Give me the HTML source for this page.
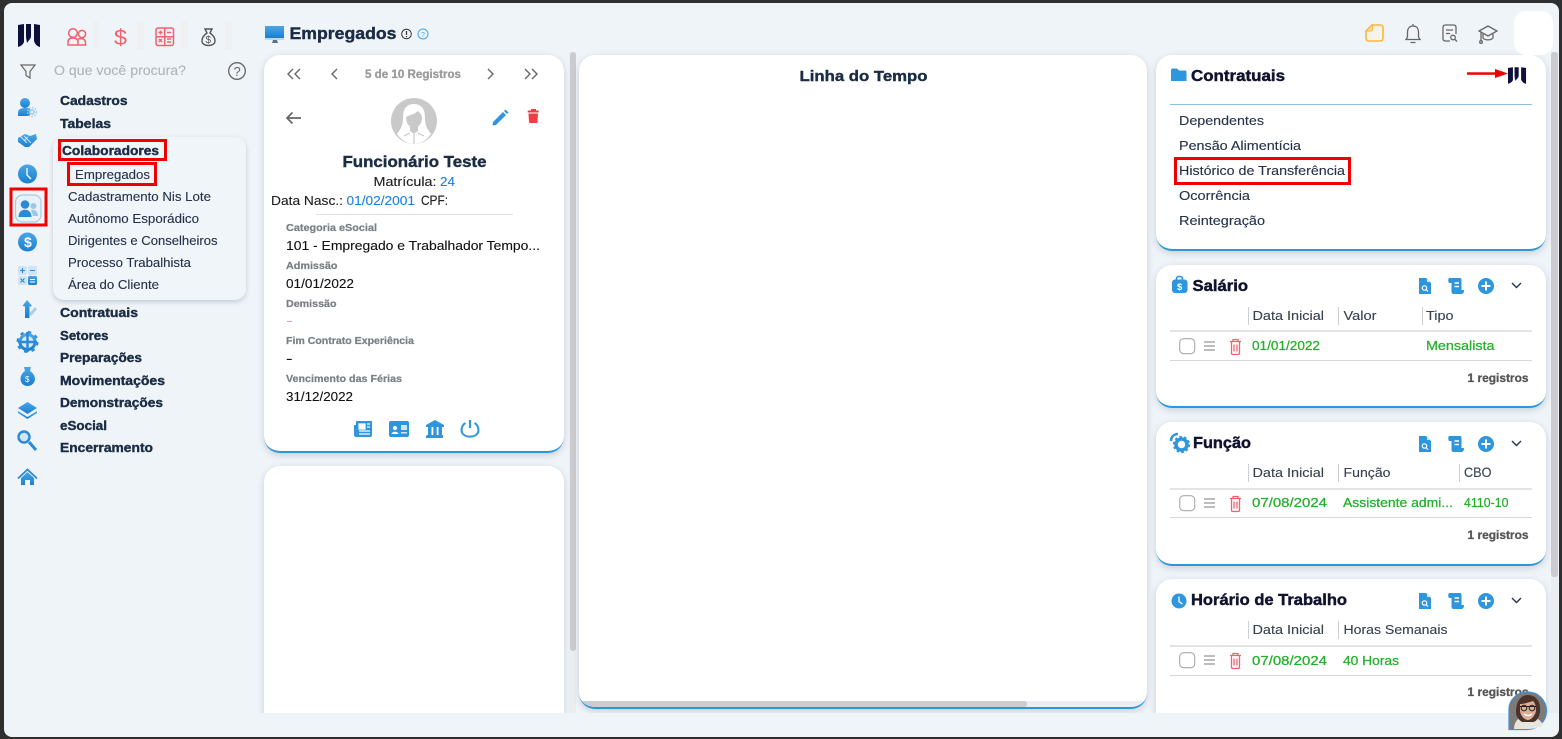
<!DOCTYPE html>
<html lang="pt-BR"><head><meta charset="utf-8"><title>Empregados</title>
<style>
html,body{margin:0;padding:0;width:1562px;height:739px;overflow:hidden;background:#2f2f2f}
#frame{position:absolute;left:4px;top:3px;width:1555px;height:734px;background:#eff4f9;border-radius:8px;overflow:hidden}
.card{position:absolute;background:#fff;border-radius:16px;box-shadow:0 2px 7px rgba(90,110,130,.28)}
.bb{border-bottom:2px solid #2e96dc;box-sizing:border-box}
#clip{position:absolute;left:0;top:0;width:1555px;height:710px;overflow:hidden}
.track{position:absolute;background:#ecedf1}
.thumb{position:absolute;background:#cbcbd0;border-radius:3px}
svg{position:absolute;left:0;top:0}
text{font-family:"Liberation Sans",sans-serif}
.b{font-weight:700}
.s1 text,text.s1{stroke:#1b2c44;stroke-width:.4px}
.s2 text,text.s2{stroke:#10122e;stroke-width:.45px}
.s3 text{stroke:#22b02a;stroke-width:.25px}
.s4 text{stroke:#7d7f88;stroke-width:.25px}
.s5{stroke:#555;stroke-width:.3px}
.s6 text{stroke:#26324a;stroke-width:.12px}
.s7 text{stroke:#36404f;stroke-width:.12px}
.s8 text{stroke:#111;stroke-width:.12px}
</style></head><body>
<div id="frame">
 <div id="clip">
  <div class="track" style="left:565px;top:49px;width:7px;height:661px"></div>
  <div class="thumb" style="left:566px;top:49px;width:6px;height:599px"></div>
  <div class="track" style="left:1547px;top:49px;width:7px;height:661px"></div>
  <div class="thumb" style="left:1547px;top:49px;width:7px;height:525px"></div>
  <div class="card bb" style="left:260px;top:52px;width:300px;height:398px"></div>
  <div class="card" style="left:260px;top:463px;width:300px;height:264px"></div>
  <div class="card bb" style="left:575px;top:52px;width:568px;height:654px;overflow:hidden">
    <div style="position:absolute;left:0;right:0;bottom:0;height:6px;background:#ecedf1"></div>
    <div style="position:absolute;left:0;width:448px;bottom:0;height:6px;background:#cbcbd0;border-radius:3px"></div>
  </div>
  <div class="card bb" style="left:1152px;top:52px;width:390px;height:196px"></div>
  <div class="card bb" style="left:1152px;top:262px;width:390px;height:143px"></div>
  <div class="card bb" style="left:1152px;top:419px;width:390px;height:144px"></div>
  <div class="card" style="left:1152px;top:576px;width:390px;height:151px"></div>
  <div class="card" style="left:49px;top:134px;width:193px;height:163px;background:#f0f5fa;border-radius:11px;box-shadow:0 2px 5px rgba(90,110,130,.3)"></div>
 </div>
 <div style="position:absolute;left:1510px;top:8px;width:39px;height:44px;background:#fff;border-radius:12px"></div>
</div>
<svg width="1562" height="739" viewBox="0 0 1562 739" xmlns="http://www.w3.org/2000/svg">
<defs>
<linearGradient id="g" x1="0" y1="0" x2="0" y2="1"><stop offset="0" stop-color="#4aa6e6"/><stop offset="1" stop-color="#1a7fd0"/></linearGradient>
<g id="logo"><path d="M0 2 L6 1 V19 C5 22 2 23.500 0 24Z M8 1 H13 V13 C13 16 10 18 9 20 C8.500 17 8 15 8 13Z M16 1 L22 2 V24 C19 23.500 17 21 16 18Z" fill="#0e0f3a"/></g>
<g id="doc"><path d="M1 0 H8 L13 5 V16 H1Z" fill="#2e96dc"/><path d="M9 0 L13 4 H9Z" fill="#cfe6f7"/><circle cx="6.500" cy="10" r="2.200" fill="none" stroke="#fff" stroke-width="1.200"/><path d="M8 11.500 L10 13.500" stroke="#fff" stroke-width="1.100"/></g>
<g id="scroll"><path d="M1 0 H12 C13 0 13.500 1 13.500 2 V12 H16 C16 15 15 16 13 16 H6 C4 16 3.500 15 3.500 13 V5 H1 C0 3.500 0 1 1 0Z" fill="#2e96dc"/><path d="M6.500 5 H11 M6.500 8.500 H11" stroke="#fff" stroke-width="1.500"/></g>
<g id="plus"><circle cx="8" cy="8" r="8" fill="#2e96dc"/><path d="M8 3.500 V12.500 M3.500 8 H12.500" stroke="#fff" stroke-width="2"/></g>
<g id="chev"><path d="M0 0 L4.500 4.500 L9 0" fill="none" stroke="#26324a" stroke-width="1.400"/></g>
<g id="rowi"><rect x="0.700" y="0.700" width="15" height="15" rx="4" fill="#fff" stroke="#a9a9a9" stroke-width="1.100"/>
<path d="M25 4 H36 M25 8 H36 M25 12 H36" stroke="#b4b4b4" stroke-width="1.800"/>
<path d="M51 3.500 H62 M54 3.500 V1.500 H59 V3.500 M52.500 3.500 V15 C52.500 16 53 16.500 54 16.500 H59 C60 16.500 60.500 16 60.500 15 V3.500 M55 6.500 V13.500 M58 6.500 V13.500" fill="none" stroke="#f4606c" stroke-width="1.300"/></g>
<g id="acts"><use href="#doc" x="0" y="0"/><use href="#scroll" x="30" y="0"/><use href="#plus" x="60" y="0"/><use href="#chev" x="94" y="5"/></g>
</defs>

<!-- top-left -->
<use href="#logo" x="18" y="23"/>
<g fill="none" stroke="#f4606c" stroke-width="1.500">
 <circle cx="73" cy="33" r="4.300"/><circle cx="82" cy="34" r="3.600"/><path d="M68 45 V42 C68 39 70 38 73 38 C76 38 78 39 78 42 V45Z M78 39 C82 38 85 39 85.500 42 V45 H78"/>
 <rect x="156" y="28" width="17.500" height="17.500" rx="2"/><path d="M164.700 28 V45.500 M156 36.700 H173.500 M158.500 32.500 H162.500 M160.500 30.500 V34.500 M167 32.500 H171 M167 39 H171 M167 42 H171 M159 39 L162 42 M162 39 L159 42"/>
</g>
<text x="114" y="45" font-size="22" fill="#f4606c" textLength="13" lengthAdjust="spacingAndGlyphs">$</text>
<rect x="93" y="22" width="6" height="27" fill="#eef0f2"/><rect x="137" y="22" width="7" height="27" fill="#eef0f2"/><rect x="181" y="22" width="7" height="27" fill="#eef0f2"/><rect x="225" y="22" width="7" height="27" fill="#eef0f2"/>
<path d="M205 29 H212 L210 33 C213 35 215 38 215 41 C215 44 212 45.500 208.500 45.500 C205 45.500 202 44 202 41 C202 38 204 35 207 33Z" fill="none" stroke="#555" stroke-width="1.400"/>
<text x="205.500" y="43" font-size="10" fill="#555" textLength="6">$</text>
<path d="M21 65 H35 L30 71.500 V78 L26 75.500 V71.500Z" fill="none" stroke="#666" stroke-width="1.200"/>
<text x="54" y="75" font-size="13.500" fill="#b0b5ba" stroke="#b0b5ba" stroke-width=".12" textLength="132" lengthAdjust="spacingAndGlyphs">O que você procura?</text>
<circle cx="237" cy="71" r="8.300" fill="none" stroke="#666" stroke-width="1.300"/>
<text x="233.500" y="76" font-size="13" fill="#666" textLength="7">?</text>

<!-- left rail -->
<g fill="url(#g)">
 <circle cx="25" cy="103" r="5"/><path d="M18 116 V113 C18 109 21 108 25 108 C27 108 29 108 30 109 V116Z"/>
 <path d="M18 138 L25 134 L30 136 L36 134 L37 139 L29 147 L25 147 L18 142Z"/>
 <circle cx="27.500" cy="174" r="9.500"/>
 <circle cx="27.500" cy="242" r="9.500"/>
 <rect x="18" y="266" width="9" height="9" rx="1.500" fill="#cfe4f5"/><rect x="28" y="266" width="9" height="9" rx="1.500" fill="#cfe4f5"/><rect x="18" y="276" width="9" height="9" rx="1.500" fill="#cfe4f5"/><rect x="28" y="276" width="9" height="9" rx="1.500"/>
 <path d="M27 300 L32 306 L29.500 306.500 V318 H25 V306.500 L22.500 306Z"/>
 <circle cx="27.500" cy="342" r="7.500" fill="#d9ebf8" stroke="url(#g)" stroke-width="3"/>
 <path d="M24 367 H31 L30 371 C33 373 35 376 35 379 C35 383 31.500 386 27.500 386 C23.500 386 20.500 383 20.500 379 C20.500 376 22 373 25 371Z"/>
 <path d="M27.500 402 L37 408 L27.500 414 L18 408Z"/><path d="M18 411 L27.500 417 L37 411 V413 L27.500 419 L18 413Z"/>
 <path d="M21 478 L27.500 472 L34 478 V485 H30 V480 H25 V485 H21Z"/>
</g>
<path d="M18 478.500 L27.500 469.500 L37 478.500" fill="none" stroke="#2a8ad8" stroke-width="1.800"/>
<path d="M20 136 L27 143 M24 136 L31 143 M28 137 L24 141" fill="none" stroke="#cfe4f5" stroke-width="1"/>
<circle cx="32" cy="112" r="3" fill="#a9cfe9"/><circle cx="32" cy="112" r="4.500" fill="none" stroke="#a9cfe9" stroke-width="1.400" stroke-dasharray="1.600 1.400"/><circle cx="32" cy="112" r="1.100" fill="#eff4f9"/>
<path d="M27 168 V175 L31 179" fill="none" stroke="#fff" stroke-width="1.300"/>
<text x="24" y="247" font-size="14" fill="#fff" class="b" textLength="7">$</text>
<path d="M20 270.500 H25 M22.500 268 V273 M30 270.500 H35 M20.500 278.500 L24.500 282.500 M24.500 278.500 L20.500 282.500" stroke="#2a8ad8" stroke-width="1.100"/>
<path d="M30 279.500 H35 M30 282 H35" stroke="#fff" stroke-width="1.100"/>
<path d="M27.500 332 V352 M18 342 H37" stroke="#2a8ad8" stroke-width="2.500"/>
<circle cx="27.500" cy="342" r="10" fill="none" stroke="#2a8ad8" stroke-width="2" stroke-dasharray="3.500 4.350"/>
<circle cx="24" cy="437" r="5.500" fill="#cfe6f7" stroke="#2a8ad8" stroke-width="2.400"/>
<path d="M29 442 L36 450" stroke="#2a8ad8" stroke-width="3"/>
<text x="25" y="382" font-size="8" fill="#fff" textLength="5">$</text>
<path d="M30 315 L36 308" stroke="#a9cfe9" stroke-width="3"/>

<!-- selected rail -->
<rect x="15.500" y="195" width="25.500" height="27" rx="7" fill="#eaf1f7" stroke="#a7cbe6" stroke-width="1.200"/>
<g fill="#2a8ad8"><circle cx="25" cy="204.500" r="4.300"/><path d="M18.500 217 C18.500 212 21.500 209.800 25 209.800 C28.500 209.800 31.500 212 31.500 217Z"/></g>
<circle cx="33.500" cy="206" r="3" fill="#9cc8e8"/><path d="M31 210 C35 209 38 212 38 216 H33Z" fill="#9cc8e8"/>
<rect x="11" y="189" width="35" height="36" fill="none" stroke="#f00000" stroke-width="3"/>

<!-- menu -->
<g fill="#1b2c44" class="s1">
<text x="60" y="105" font-size="13" class="b" textLength="67.500" lengthAdjust="spacingAndGlyphs">Cadastros</text>
<text x="60" y="128" font-size="13" class="b" textLength="51" lengthAdjust="spacingAndGlyphs">Tabelas</text>
<text x="62" y="155" font-size="13" class="b" textLength="97" lengthAdjust="spacingAndGlyphs">Colaboradores</text>
<text x="60" y="317" font-size="13" class="b" textLength="78" lengthAdjust="spacingAndGlyphs">Contratuais</text>
<text x="60" y="340" font-size="13" class="b" textLength="48.500" lengthAdjust="spacingAndGlyphs">Setores</text>
<text x="60" y="362" font-size="13" class="b" textLength="82" lengthAdjust="spacingAndGlyphs">Preparações</text>
<text x="60" y="385" font-size="13" class="b" textLength="105" lengthAdjust="spacingAndGlyphs">Movimentações</text>
<text x="60" y="407" font-size="13" class="b" textLength="103" lengthAdjust="spacingAndGlyphs">Demonstrações</text>
<text x="60" y="430" font-size="13" class="b" textLength="47" lengthAdjust="spacingAndGlyphs">eSocial</text>
<text x="60" y="452" font-size="13" class="b" textLength="93" lengthAdjust="spacingAndGlyphs">Encerramento</text>
</g>
<g fill="#26324a" font-size="12.500" class="s6">
<text x="75" y="179" textLength="75" lengthAdjust="spacingAndGlyphs">Empregados</text>
<text x="68" y="201" textLength="143" lengthAdjust="spacingAndGlyphs">Cadastramento Nis Lote</text>
<text x="68" y="223" textLength="131" lengthAdjust="spacingAndGlyphs">Autônomo Esporádico</text>
<text x="68" y="245" textLength="149.500" lengthAdjust="spacingAndGlyphs">Dirigentes e Conselheiros</text>
<text x="68" y="267" textLength="123" lengthAdjust="spacingAndGlyphs">Processo Trabalhista</text>
<text x="68" y="289" textLength="91" lengthAdjust="spacingAndGlyphs">Área do Cliente</text>
</g>
<rect x="59.500" y="140.500" width="106" height="19" fill="none" stroke="#f00000" stroke-width="3"/>
<rect x="68.500" y="163.500" width="87" height="21" fill="none" stroke="#f00000" stroke-width="3"/>

<!-- title -->
<rect x="265" y="26" width="19" height="12" fill="url(#g)"/><rect x="265" y="38" width="19" height="2" fill="#bcd9ee"/><path d="M272 43 H278 L277 40 H273Z" fill="#59748a"/>
<text x="289.500" y="39" font-size="17" class="b s1" fill="#1b2c44" textLength="107" lengthAdjust="spacingAndGlyphs">Empregados</text>
<circle cx="406.500" cy="34" r="4.800" fill="none" stroke="#333" stroke-width="1"/><path d="M406.500 31 V35 M406.500 36 V37.300" stroke="#333" stroke-width="1.200"/>
<circle cx="423" cy="34" r="5" fill="none" stroke="#4aa6e6" stroke-width="1"/><text x="421" y="37" font-size="7" fill="#4aa6e6" textLength="4">?</text>

<!-- top right -->
<path d="M1372 25 H1380 C1382 25 1383 26 1383 28 V38 C1383 40 1382 41 1380 41 H1369 C1367 41 1366 40 1366 38 V31Z" fill="#f6f3ea" stroke="#f8b83f" stroke-width="1.600"/>
<path d="M1366 31 H1371 C1372 31 1372.500 30.500 1372.500 29.500 V25Z" fill="#fbe0a6" stroke="#f8b83f" stroke-width="1"/>
<g fill="none" stroke="#666" stroke-width="1.300">
<path d="M1413 26 C1409 26 1407.500 29 1407.500 32 V37 L1406 39.500 H1420 L1418.500 37 V32 C1418.500 29 1417 26 1413 26Z M1410.500 42.500 H1415.500 M1413 24 V26"/>
<path d="M1456 34 V27 C1456 26 1455 25 1454 25 H1445 C1444 25 1443 26 1443 27 V39 C1443 40 1444 41 1445 41 H1450 M1446 30 H1453 M1446 33.500 H1450"/>
<circle cx="1453" cy="37.500" r="2.300"/><path d="M1455 39.500 L1457 41.500"/>
<path d="M1488 26 L1479 31 L1488 36 L1497 31Z M1483 34 V38 C1485 40.500 1491 40.500 1493 38 V34 M1481 32 V41"/><circle cx="1481" cy="42" r="1.300"/>
</g>

<!-- employee card -->
<g fill="none" stroke="#666" stroke-width="1.400">
<path d="M293 69 L288 74 L293 79 M300 69 L295 74 L300 79"/>
<path d="M337 69 L332 74 L337 79"/>
<path d="M488 69 L493 74 L488 79"/>
<path d="M525 69 L530 74 L525 79 M532 69 L537 74 L532 79"/>
</g>
<text x="365" y="78" font-size="11.500" class="b" fill="#9a9a9a" stroke="#9a9a9a" stroke-width=".3" textLength="96" lengthAdjust="spacingAndGlyphs">5 de 10 Registros</text>
<path d="M301 118 H287 M292.500 112.500 L287 118 L292.500 123.500" fill="none" stroke="#666" stroke-width="1.700"/>
<circle cx="414" cy="121" r="23" fill="#c9c9c9"/>
<path d="M414 104 C405 104 403 111 403 118 C403 126 400 130 397 134 C402 141 408 144 414 144 C420 144 426 141 431 134 C428 130 425 126 425 118 C425 111 423 104 414 104Z" fill="#fff"/>
<path d="M406 117 C410 115 415 114 418 111 C420 113 422 115 422 118 C422 124 418 128 414 128 C410 128 406 124 406 117Z" fill="#c9c9c9"/>
<path d="M410 127 H418 V131 L414 134 L410 131Z" fill="#c9c9c9"/>
<path d="M414 134 V144 M404 136 L410 133 M424 136 L418 133" stroke="#c9c9c9" stroke-width="1.200" fill="none"/>
<path d="M493 122 L503 112 L506 115 L496 125 L492.500 125.500Z M504 111 L505.500 109.500 L508.500 112.500 L507 114Z" fill="#2e96dc"/>
<path d="M527.700 110.500 H531 V109 H536 V110.500 H538.700 V112.500 H527.700Z M528.500 113.500 H538 L537.500 122 C537.500 122.700 537 123 536.500 123 H530 C529.500 123 529 122.700 529 122Z" fill="#ef3d42"/>
<text x="342.500" y="167" font-size="15.500" class="b s1" fill="#1b2c44" textLength="144" lengthAdjust="spacingAndGlyphs">Funcionário Teste</text>
<g class="s8">
<text x="373.500" y="186" font-size="13" fill="#222" textLength="63" lengthAdjust="spacingAndGlyphs">Matrícula:</text>
<text x="271" y="205" font-size="13" fill="#222" textLength="72" lengthAdjust="spacingAndGlyphs">Data Nasc.:</text>
<text x="421" y="205" font-size="14" fill="#222" textLength="27" lengthAdjust="spacingAndGlyphs">CPF:</text>
</g>
<text x="440" y="186" font-size="13" fill="#1f7fe0" stroke="#1f7fe0" stroke-width=".12" textLength="15" lengthAdjust="spacingAndGlyphs">24</text>
<text x="346.500" y="205" font-size="13" fill="#1f7fe0" stroke="#1f7fe0" stroke-width=".12" textLength="68.500" lengthAdjust="spacingAndGlyphs">01/02/2001</text>
<rect x="316" y="214" width="197" height="1" fill="#e2e2e2"/>
<g font-size="10.500" fill="#7d7f88" class="s4">
<text x="286" y="231" class="b" textLength="91" lengthAdjust="spacingAndGlyphs">Categoria eSocial</text>
<text x="286" y="269" class="b" textLength="51.500" lengthAdjust="spacingAndGlyphs">Admissão</text>
<text x="286" y="307" class="b" textLength="50.500" lengthAdjust="spacingAndGlyphs">Demissão</text>
<text x="286" y="344" class="b" textLength="128" lengthAdjust="spacingAndGlyphs">Fim Contrato Experiência</text>
<text x="286" y="382" class="b" textLength="116" lengthAdjust="spacingAndGlyphs">Vencimento das Férias</text>
</g>
<g font-size="13" fill="#111" class="s8">
<text x="286" y="250" textLength="254" lengthAdjust="spacingAndGlyphs">101 - Empregado e Trabalhador Tempo...</text>
<text x="286" y="288" textLength="68" lengthAdjust="spacingAndGlyphs">01/01/2022</text>
<text x="286" y="363" textLength="6.500" lengthAdjust="spacingAndGlyphs">-</text>
<text x="286" y="401" textLength="67" lengthAdjust="spacingAndGlyphs">31/12/2022</text>
</g>
<rect x="287" y="321" width="5" height="1" fill="#f59aa0"/>
<g fill="#2e96dc">
<path d="M354 425 H356 V421 H372 V435 C372 436 371 437 370 437 H356 C355 437 354 436 354 435Z"/>
<path d="M359 424 H365 V429 H359Z M367 424 H370 M367 427 H370 M359 431 H370 M359 434 H370" stroke="#fff" stroke-width="1.200" fill="#fff"/>
<rect x="389" y="421" width="20" height="16" rx="2"/>
<circle cx="395" cy="428" r="2" fill="#fff"/><path d="M391.500 434 C392 431 398 431 398.500 434Z" fill="#fff"/><rect x="401" y="425" width="6" height="5" fill="#cfe6f7"/><rect x="401" y="432" width="6" height="1.500" fill="#cfe6f7"/>
<path d="M435 420 L444 425 V427 H426 V425Z M427 435 H443 V438 H426 V436Z M428 427 H431.500 V435 H428Z M433.300 427 H436.700 V435 H433.300Z M438.500 427 H442 V435 H438.500Z"/>
</g>
<path d="M470 420 V428" stroke="#2e96dc" stroke-width="2.200" fill="none"/>
<path d="M465.500 423 C462 425 460.800 429.500 462 432.500 C464.500 438 475.500 438 478 432.500 C479.200 429.500 478 425 474.500 423" fill="none" stroke="#2e96dc" stroke-width="2"/>

<text x="799.500" y="81" font-size="15" class="b s1" fill="#1b2c44" textLength="128" lengthAdjust="spacingAndGlyphs">Linha do Tempo</text>

<!-- Contratuais -->
<path d="M1171 70 C1171 69 1172 68.500 1173 68.500 H1177 L1179 70.500 H1185 C1186 70.500 1186.500 71 1186.500 72 V81 H1171Z" fill="#2e96dc"/>
<text x="1191" y="81" font-size="15.500" class="b s2" fill="#10122e" textLength="94" lengthAdjust="spacingAndGlyphs">Contratuais</text>
<rect x="1467" y="72.300" width="32" height="2.500" fill="#f00000"/><path d="M1495 69 L1508 73.500 L1495 78Z" fill="#f00000"/>
<g transform="translate(1508,66.500) scale(.82,.72)"><use href="#logo"/></g>
<rect x="1170" y="104" width="362" height="1" fill="#8fbfe0"/>
<g font-size="13" fill="#26324a" class="s6">
<text x="1179" y="125" textLength="85" lengthAdjust="spacingAndGlyphs">Dependentes</text>
<text x="1179" y="150" textLength="122" lengthAdjust="spacingAndGlyphs">Pensão Alimentícia</text>
<text x="1179" y="175" textLength="166" lengthAdjust="spacingAndGlyphs">Histórico de Transferência</text>
<text x="1179" y="200" textLength="71" lengthAdjust="spacingAndGlyphs">Ocorrência</text>
<text x="1179" y="225" textLength="86" lengthAdjust="spacingAndGlyphs">Reintegração</text>
</g>
<rect x="1175.500" y="158.500" width="174" height="25" fill="none" stroke="#f00000" stroke-width="3"/>

<!-- Salário -->
<path d="M1176.500 280 V278.500 C1176.500 277 1177.500 276.500 1179.500 276.500 C1181.500 276.500 1182.500 277 1182.500 278.500 V280" fill="none" stroke="#2e96dc" stroke-width="1.600"/>
<rect x="1172" y="279.500" width="15.500" height="13.500" rx="3" fill="#2e96dc"/><text x="1177" y="290" font-size="9.500" class="b" fill="#fff" textLength="5.500">$</text>
<text x="1192.500" y="291" font-size="15.500" class="b s2" fill="#10122e" textLength="55.500" lengthAdjust="spacingAndGlyphs">Salário</text>
<use href="#acts" x="1418" y="278"/>
<rect x="1248" y="307" width="1" height="18" fill="#ccd0d6"/><rect x="1338" y="307" width="1" height="18" fill="#ccd0d6"/><rect x="1422" y="307" width="1" height="18" fill="#ccd0d6"/>
<g font-size="13" fill="#36404f" class="s7">
<text x="1252.500" y="320" textLength="71.500" lengthAdjust="spacingAndGlyphs">Data Inicial</text>
<text x="1343.500" y="320" textLength="33" lengthAdjust="spacingAndGlyphs">Valor</text>
<text x="1426" y="320" textLength="27.500" lengthAdjust="spacingAndGlyphs">Tipo</text>
</g>
<rect x="1170" y="330" width="362" height="2" fill="#e3e4e6"/><rect x="1170" y="360" width="362" height="1" fill="#d4d8dc"/>
<use href="#rowi" x="1179" y="338"/>
<g font-size="13" fill="#22b02a" class="s3">
<text x="1252" y="350" textLength="68" lengthAdjust="spacingAndGlyphs">01/01/2022</text>
<text x="1426" y="350" textLength="68.500" lengthAdjust="spacingAndGlyphs">Mensalista</text>
</g>
<text x="1467.500" y="382" font-size="12" class="b s5" fill="#555" textLength="61" lengthAdjust="spacingAndGlyphs">1 registros</text>

<!-- Função -->
<circle cx="1181.500" cy="444.500" r="5.500" fill="none" stroke="#2e96dc" stroke-width="3.500"/>
<circle cx="1181.500" cy="444.500" r="7.800" fill="none" stroke="#2e96dc" stroke-width="1.600" stroke-dasharray="2.600 2.300"/>
<path d="M1171 441 C1171 437 1174 434 1178 434" fill="none" stroke="#2e96dc" stroke-width="2.500"/>
<text x="1193" y="448" font-size="15.500" class="b s2" fill="#10122e" textLength="58" lengthAdjust="spacingAndGlyphs">Função</text>
<use href="#acts" x="1418" y="436"/>
<rect x="1248" y="464" width="1" height="18" fill="#ccd0d6"/><rect x="1338" y="464" width="1" height="18" fill="#ccd0d6"/><rect x="1459" y="464" width="1" height="18" fill="#ccd0d6"/>
<g font-size="13" fill="#36404f" class="s7">
<text x="1252.500" y="477" textLength="71.500" lengthAdjust="spacingAndGlyphs">Data Inicial</text>
<text x="1343.500" y="477" textLength="47" lengthAdjust="spacingAndGlyphs">Função</text>
<text x="1464" y="477" font-size="14" textLength="27.500" lengthAdjust="spacingAndGlyphs">CBO</text>
</g>
<rect x="1170" y="488" width="362" height="2" fill="#e3e4e6"/><rect x="1170" y="517" width="362" height="1" fill="#d4d8dc"/>
<use href="#rowi" x="1179" y="495"/>
<g font-size="13" fill="#22b02a" class="s3">
<text x="1252" y="507" textLength="75" lengthAdjust="spacingAndGlyphs">07/08/2024</text>
<text x="1343" y="507" textLength="110" lengthAdjust="spacingAndGlyphs">Assistente admi...</text>
<text x="1464" y="507" textLength="44.500" lengthAdjust="spacingAndGlyphs">4110-10</text>
</g>
<text x="1467.500" y="539" font-size="12" class="b s5" fill="#555" textLength="61" lengthAdjust="spacingAndGlyphs">1 registros</text>

<!-- Horário -->
<circle cx="1179" cy="601" r="7.500" fill="#2e96dc"/><path d="M1179 596.500 V601.500 L1182.500 604" fill="none" stroke="#fff" stroke-width="1.300"/>
<text x="1191" y="605" font-size="15.500" class="b s2" fill="#10122e" textLength="156" lengthAdjust="spacingAndGlyphs">Horário de Trabalho</text>
<use href="#acts" x="1418" y="593"/>
<rect x="1248" y="621" width="1" height="18" fill="#ccd0d6"/><rect x="1338" y="621" width="1" height="18" fill="#ccd0d6"/>
<g font-size="13" fill="#36404f" class="s7">
<text x="1252.500" y="634" textLength="71.500" lengthAdjust="spacingAndGlyphs">Data Inicial</text>
<text x="1343.500" y="634" textLength="104" lengthAdjust="spacingAndGlyphs">Horas Semanais</text>
</g>
<rect x="1170" y="645" width="362" height="2" fill="#e3e4e6"/><rect x="1170" y="675" width="362" height="1" fill="#d4d8dc"/>
<use href="#rowi" x="1179" y="652"/>
<g font-size="13" fill="#22b02a" class="s3">
<text x="1252" y="665" textLength="75" lengthAdjust="spacingAndGlyphs">07/08/2024</text>
<text x="1343" y="665" textLength="56" lengthAdjust="spacingAndGlyphs">40 Horas</text>
</g>
<text x="1467.500" y="696" font-size="12" class="b s5" fill="#555" textLength="61" lengthAdjust="spacingAndGlyphs">1 registros</text>

<!-- avatar -->
<path d="M1509 729.500 V709 C1509 700 1517 692 1527.500 692 C1538 692 1546.500 700 1546.500 711 C1546.500 721 1538 729.500 1527.500 729.500Z" fill="#7d7a78" stroke="#3c8fe6" stroke-width="1.200"/>
<path d="M1514 729 C1514 722 1518 718 1522 717 H1533 C1538 718 1542 722 1543 725 C1539 728 1533 729 1527 729Z" fill="#e8e4de"/>
<path d="M1516 712 C1516 700 1522 695 1528 695 C1536 695 1541 702 1540 712 C1539 718 1536 722 1533 722 L1522 722 C1519 720 1516 717 1516 712Z" fill="#4a332b"/>
<path d="M1520 704 C1524 704 1530 702 1533 701 C1536 704 1536 708 1536 711 C1535 716 1531 720 1528 720 C1524 720 1520 715 1520 710Z" fill="#dcae98"/>
<path d="M1520 706.500 H1536" stroke="#222" stroke-width="1"/><circle cx="1524" cy="708" r="2.800" fill="none" stroke="#222" stroke-width="1"/><circle cx="1532" cy="708" r="2.800" fill="none" stroke="#222" stroke-width="1"/>
<path d="M1524 714 C1526 716 1530 716 1532 714" stroke="#fff" stroke-width="1.400" fill="none"/>
</svg>
</body></html>
